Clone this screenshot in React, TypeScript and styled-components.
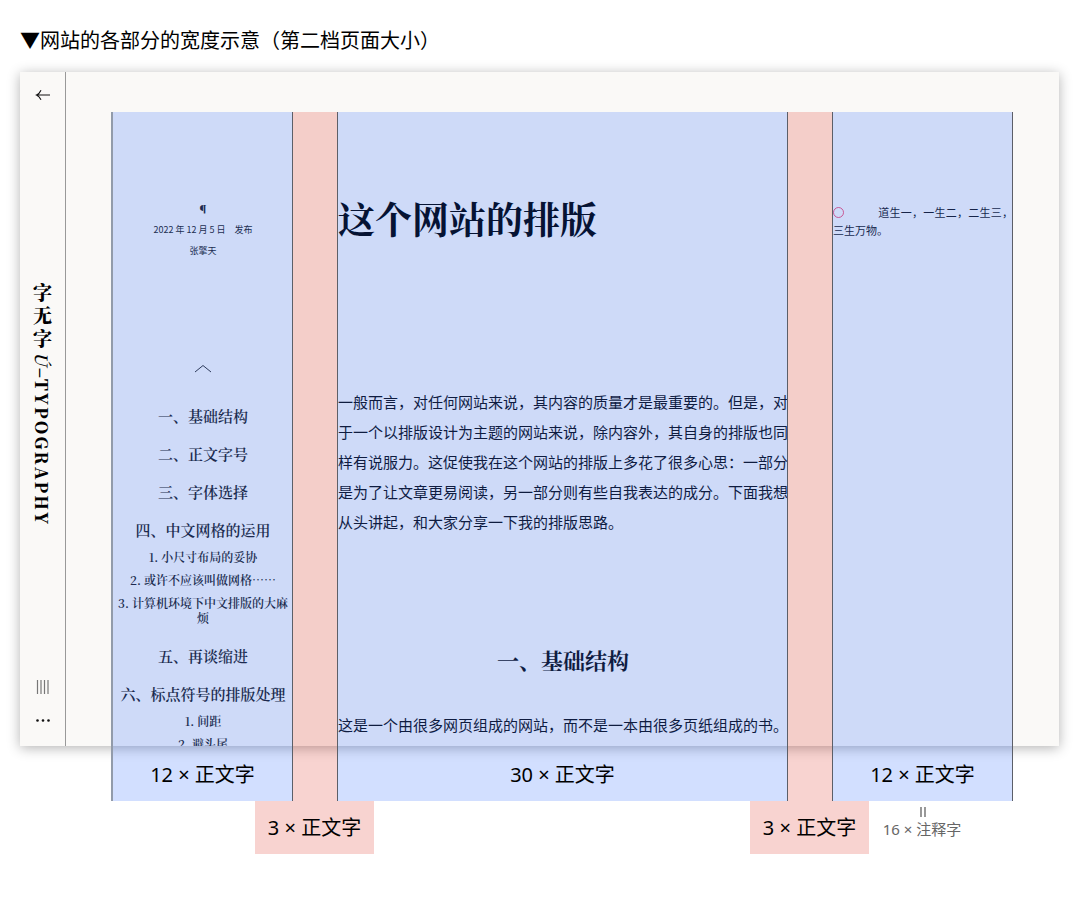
import React from "react";
import styled, { createGlobalStyle } from "styled-components";

const sans = `"Noto Sans CJK SC", "Noto Sans", sans-serif`;
const labelSans = `"Noto Sans", "Noto Sans CJK SC", sans-serif`;
const serif = `"Noto Serif CJK SC", "Noto Serif SC", "Liberation Serif", "Noto Sans CJK SC", serif`;

const GlobalStyle = createGlobalStyle`
  * { box-sizing: border-box; }
  body { margin: 0; background: #fff; color: #000; font-family: ${sans}; }
  h1, h2, p, ol, figure { margin: 0; padding: 0; }
  a { color: inherit; text-decoration: none; }
`;

const Figure = styled.figure`
  padding: 25px 21px 46px 20px;
`;

const Caption = styled.figcaption`
  margin-bottom: 17px;
  font-size: 20px;
  line-height: 30px;
`;

/* The browser frame and the measuring columns share the first grid row. */
const Diagram = styled.div`
  display: grid;
  grid-template-columns: minmax(0, 1fr);
  grid-template-rows: auto 55px auto;
`;

const Frame = styled.section`
  grid-area: 1 / 1;
  display: flex;
  height: 674px;
  overflow: hidden;
  background: #faf9f7;
  box-shadow: 0 2px 12px rgba(0, 0, 0, 0.3);
`;

const Sidebar = styled.nav`
  display: flex;
  flex: none;
  flex-direction: column;
  align-items: center;
  width: 46px;
  padding-bottom: 10px;
  border-right: 1px solid #999;
`;

const IconButton = styled.button<{ $tall?: boolean }>`
  display: grid;
  place-items: center;
  width: 45px;
  height: ${(p) => (p.$tall ? 46 : 33)}px;
  padding: 0;
  border: 0;
  background: none;
  color: #111;
  cursor: pointer;
`;

const Wordmark = styled.a`
  display: flex;
  flex: 1;
  align-items: center;
  justify-content: center;
  padding-top: 20px;
  writing-mode: vertical-rl;
  font-family: ${serif};
  font-size: 19px;
  font-weight: 900;
  line-height: 45px;
  white-space: nowrap;
`;

const Hanzi = styled.span`
  letter-spacing: 4px;
`;

const Latin = styled.span`
  font-size: 17px;
  letter-spacing: 2px;

  i {
    font-weight: 600;
  }
`;

const columns = `
  display: grid;
  grid-template-columns:
    minmax(0, 12fr) minmax(0, 3fr) minmax(0, 30fr) minmax(0, 3fr) minmax(0, 12fr);
`;

const Page = styled.div`
  ${columns}
  flex: 1;
  align-items: start;
  padding: 39px 46px 0 47px;
`;

const Contents = styled.aside`
  grid-column: 1;
  padding: 87px 4px 0;
  color: #1c1c24;
  text-align: center;
`;

const Meta = styled.p`
  font-size: 9px;
  line-height: 21px;
`;

const Pilcrow = styled(Meta)`
  font-family: ${serif};
  font-weight: 900;
`;

const Chevron = styled.svg`
  display: block;
  margin: 103px auto 24px;
`;

const TocList = styled.ol`
  list-style: none;
  font-family: ${serif};
  font-size: 15px;
  font-weight: 600;
  line-height: 38px;
`;

const SubList = styled.ol`
  display: grid;
  gap: 8px;
  margin: 0 -4px;
  padding: 0 4px 12px;
  list-style: none;
  font-size: 12px;
  line-height: 15px;
`;

const Article = styled.article`
  grid-column: 3;
  color: #0c0c10;
`;

const Title = styled.h1`
  padding: 80px 0 142px;
  font-family: ${serif};
  font-size: 37px;
  font-weight: 700;
  line-height: 54px;
  color: #000;
`;

const Heading = styled.h2`
  padding: 108px 0 35px;
  font-family: ${serif};
  font-size: 22px;
  font-weight: 700;
  line-height: 30px;
  text-align: center;
`;

const Paragraph = styled.p`
  font-size: 15px;
  line-height: 30px;
`;

const Note = styled.aside`
  grid-column: 5;
  padding-top: 92px;
  color: #16161c;
  font-size: 11px;
  line-height: 18px;
  text-align: justify;
`;

const Ring = styled.svg`
  width: 45px;
  height: 11px;
  vertical-align: -1px;
`;

const Measures = styled.div`
  ${columns}
  grid-area: 1 / 1 / span 2;
  margin-top: 40px;
  padding: 0 46px 0 93px;
  pointer-events: none;
`;

const Measure = styled.div<{ $gutter?: boolean; $first?: boolean }>`
  display: flex;
  align-items: flex-end;
  justify-content: center;
  border-right: 1px solid #5c5f68;
  background: ${(p) => (p.$gutter ? "rgba(220, 35, 20, 0.2)" : "rgba(32, 96, 255, 0.2)")};
  background-clip: padding-box;
  box-shadow: ${(p) => (p.$first ? "-2px 0 0 #929baa" : "none")};
  font-family: ${labelSans};
  font-size: 20px;
  line-height: 53px;
`;

const Legend = styled.div`
  ${columns}
  grid-area: 3 / 1;
  justify-items: center;
  padding: 0 47px 0 92px;
  font-family: ${labelSans};
`;

const GutterLabel = styled.p<{ $column: number }>`
  grid-column: ${(p) => p.$column};
  padding: 0 13px;
  background: #f8d3d0;
  font-size: 20px;
  line-height: 53px;
  white-space: nowrap;
`;

const Equivalent = styled.div`
  grid-column: 5;
  display: flex;
  flex-direction: column;
  align-items: center;
  padding-top: 6px;
  color: #666;
  font-size: 15px;
  line-height: 24px;
`;

type Entry = { title: string; sub?: string[] };

const toc: Entry[] = [
  { title: "一、基础结构" },
  { title: "二、正文字号" },
  { title: "三、字体选择" },
  {
    title: "四、中文网格的运用",
    sub: ["1. 小尺寸布局的妥协", "2. 或许不应该叫做网格……", "3. 计算机环境下中文排版的大麻烦"],
  },
  { title: "五、再谈缩进" },
  { title: "六、标点符号的排版处理", sub: ["1. 间距", "2. 避头尾"] },
];

export default function App() {
  return (
    <>
      <GlobalStyle />
      <Figure lang="zh-CN">
        <Caption>▼网站的各部分的宽度示意（第二档页面大小）</Caption>
        <Diagram>
          <Frame>
            <Sidebar>
              <IconButton $tall aria-label="返回">
                <svg width="16" height="12" viewBox="0 0 16 12" fill="none" stroke="currentColor" strokeWidth="1.1">
                  <path d="M15 6H1.5M6 1.2C5 3.4 3.4 5.200 1.500 6C3.400 6.800 5 8.600 6 10.800" />
                </svg>
              </IconButton>
              <Wordmark href="#home">
                <span>
                  <Hanzi>字无字</Hanzi>
                  <Latin>
                    <i>Ú</i>–TYPOGRAPHY
                  </Latin>
                </span>
              </Wordmark>
              <IconButton aria-label="网格">
                <svg width="13" height="14" viewBox="0 0 13 14" stroke="#777" strokeWidth="1.2">
                  <path d="M1.500 0V14M5 0V14M8.500 0V14M12 0V14" />
                </svg>
              </IconButton>
              <IconButton aria-label="更多">
                <svg width="16" height="4" viewBox="0 0 16 4" fill="currentColor">
                  <circle cx="2.500" cy="2.500" r="1.300" />
                  <circle cx="8" cy="2.500" r="1.300" />
                  <circle cx="13.500" cy="2.500" r="1.300" />
                </svg>
              </IconButton>
            </Sidebar>
            <Page>
              <Contents>
                <Pilcrow>¶</Pilcrow>
                <Meta>2022 年 12 月 5 日　发布</Meta>
                <Meta>张擎天</Meta>
                <Chevron width="18" height="9" viewBox="0 0 18 9" fill="none" stroke="#333" strokeWidth="1">
                  <path d="M1 8L9 1.500L17 8" />
                </Chevron>
                <TocList>
                  {toc.map((entry) => (
                    <li key={entry.title}>
                      <a href="#toc">{entry.title}</a>
                      {entry.sub && (
                        <SubList>
                          {entry.sub.map((text) => (
                            <li key={text}>
                              <a href="#toc">{text}</a>
                            </li>
                          ))}
                        </SubList>
                      )}
                    </li>
                  ))}
                </TocList>
              </Contents>
              <Article>
                <Title>这个网站的排版</Title>
                <Paragraph>
                  一般而言，对任何网站来说，其内容的质量才是最重要的。但是，对于一个以排版设计为主题的网站来说，除内容外，其自身的排版也同样有说服力。这促使我在这个网站的排版上多花了很多心思：一部分是为了让文章更易阅读，另一部分则有些自我表达的成分。下面我想从头讲起，和大家分享一下我的排版思路。
                </Paragraph>
                <Heading>一、基础结构</Heading>
                <Paragraph>这是一个由很多网页组成的网站，而不是一本由很多页纸组成的书。</Paragraph>
              </Article>
              <Note>
                <Ring viewBox="0 0 45 11" fill="none" stroke="#f0305c" strokeWidth="0.8">
                  <circle cx="5.500" cy="5.500" r="5" />
                </Ring>
                道生一，一生二，二生三，三生万物。
              </Note>
            </Page>
          </Frame>
          <Measures>
            <Measure $first>12 × 正文字</Measure>
            <Measure $gutter />
            <Measure>30 × 正文字</Measure>
            <Measure $gutter />
            <Measure>12 × 正文字</Measure>
          </Measures>
          <Legend>
            <GutterLabel $column={2}>3 × 正文字</GutterLabel>
            <GutterLabel $column={4}>3 × 正文字</GutterLabel>
            <Equivalent>
              <svg width="8" height="10" viewBox="0 0 8 10" stroke="#555" strokeWidth="1.2">
                <path d="M3 0V10M7 0V10" />
              </svg>
              <span>16 × 注释字</span>
            </Equivalent>
          </Legend>
        </Diagram>
      </Figure>
    </>
  );
}
